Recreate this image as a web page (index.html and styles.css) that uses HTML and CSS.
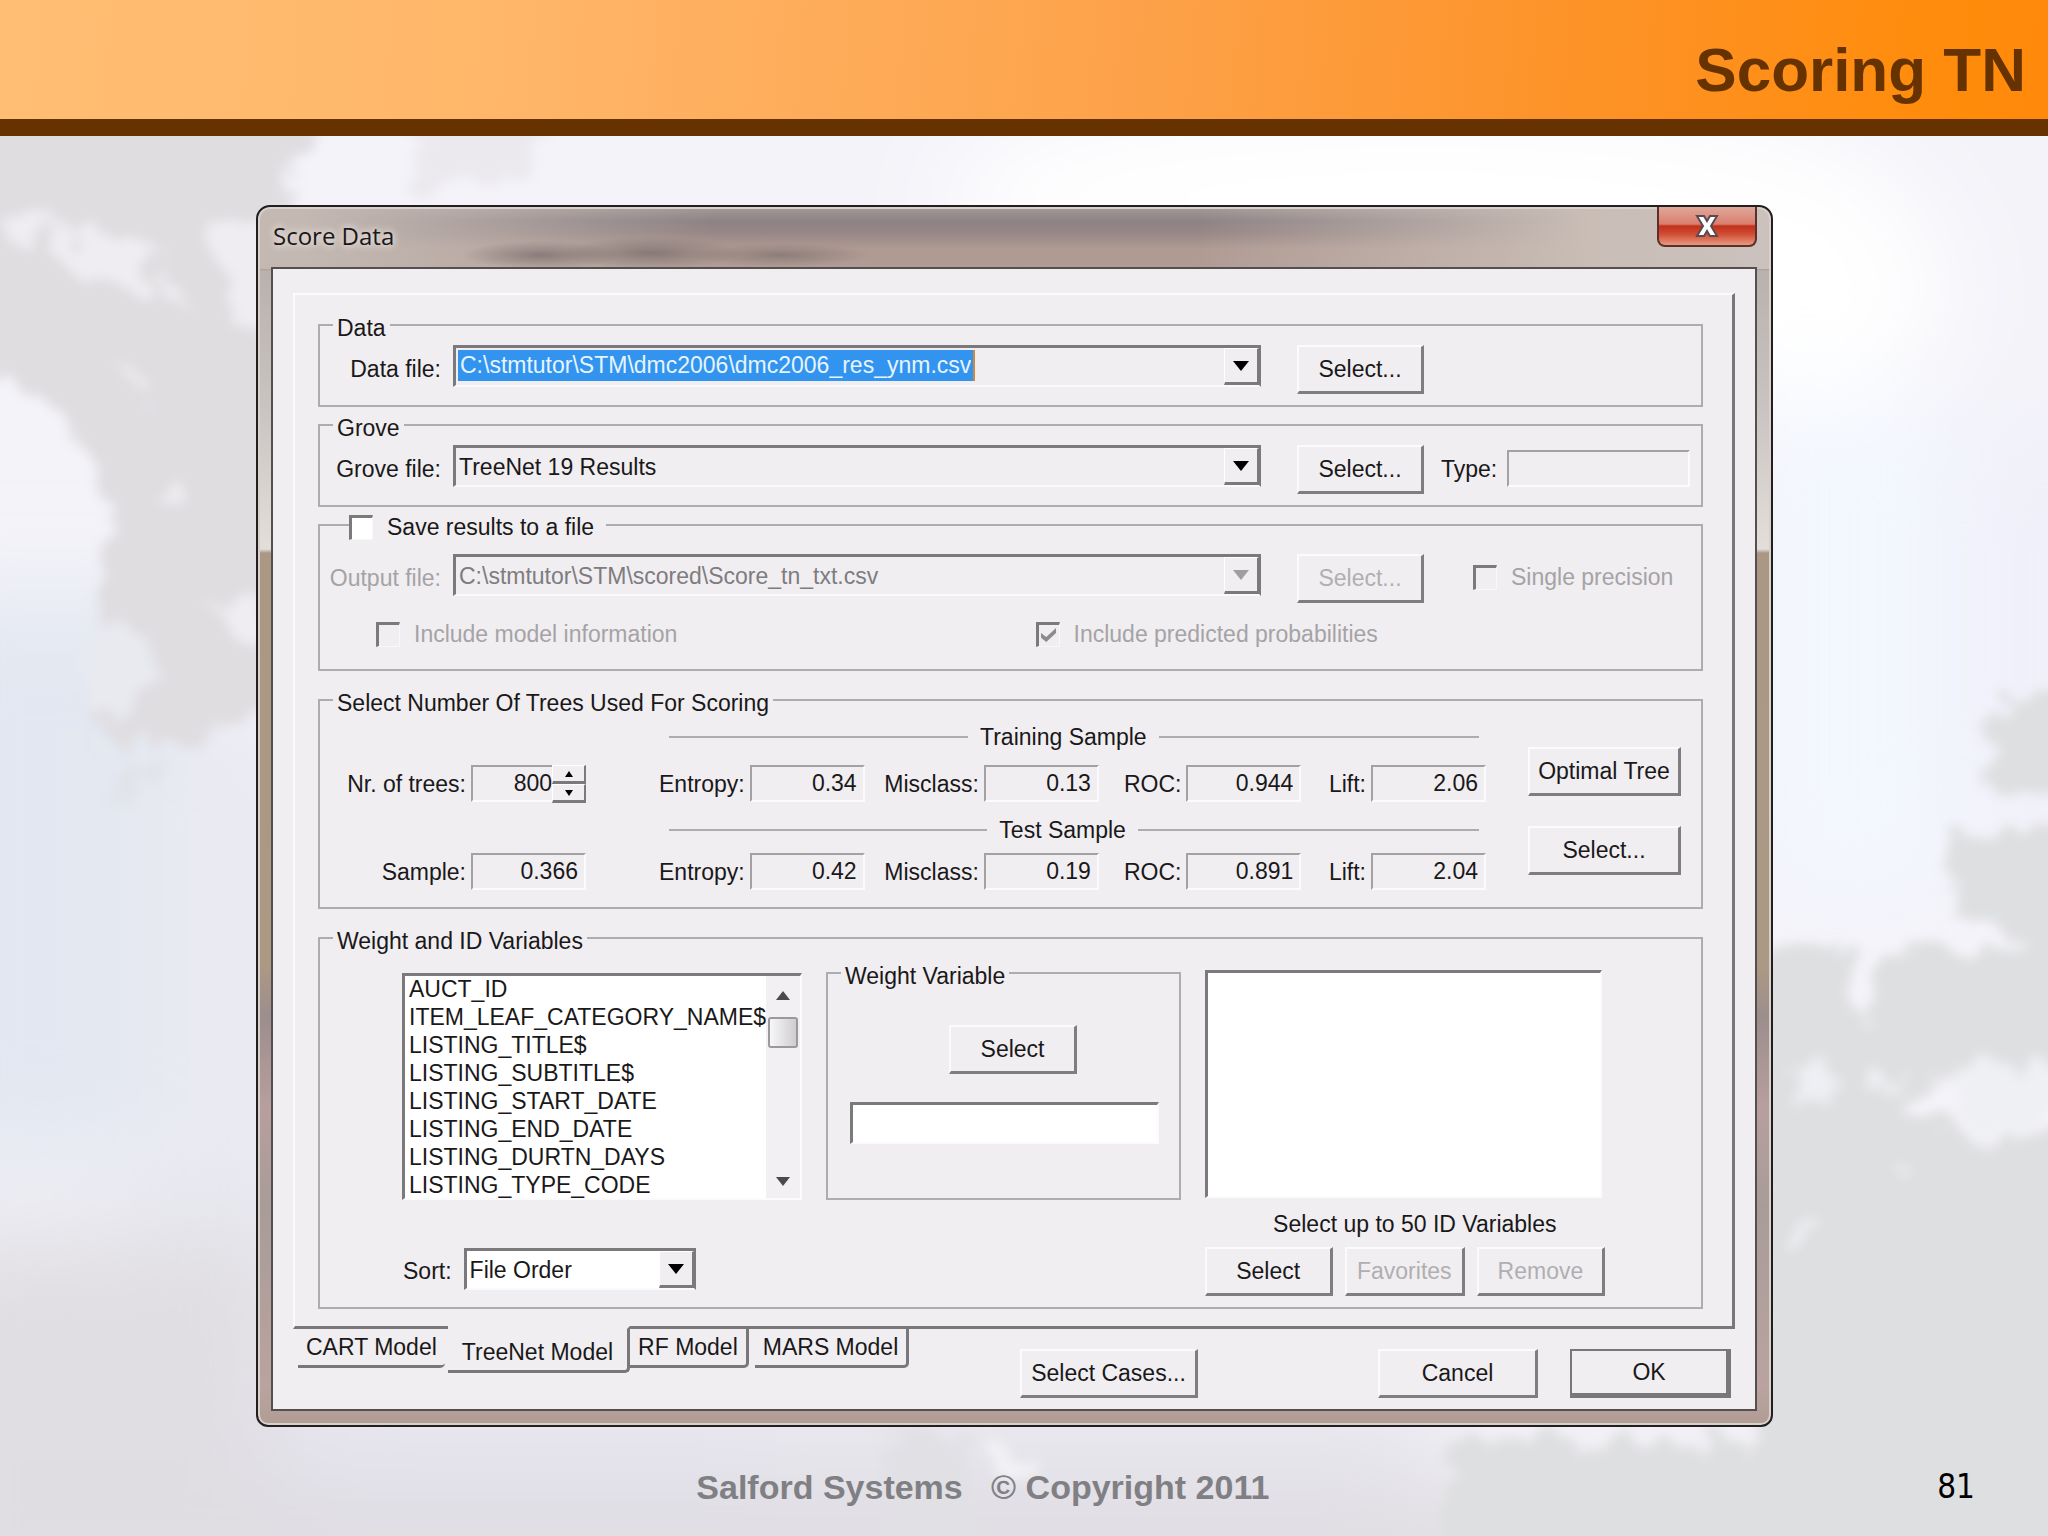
FILE: index.html
```html
<!DOCTYPE html>
<html lang="en">
<head>
<meta charset="utf-8">
<title>Scoring TN</title>
<link rel="stylesheet" href="styles.css">
</head>
<body>
<div class="slide">
  <svg class="backdrop" viewBox="0 0 2048 1536" preserveAspectRatio="none" aria-hidden="true">
    <defs>
      <filter id="soft" x="-20%" y="-20%" width="140%" height="140%"><feGaussianBlur stdDeviation="50"/></filter>
      <filter id="leaf" x="-10%" y="-10%" width="120%" height="120%">
        <feTurbulence type="fractalNoise" baseFrequency="0.03" numOctaves="4" seed="4" result="n"/>
        <feDisplacementMap in="SourceGraphic" in2="n" scale="60" xChannelSelector="R" yChannelSelector="G"/>
        <feGaussianBlur stdDeviation="6"/>
      </filter>
    </defs>
    <rect width="2048" height="1536" fill="#f4f3f9"/>
    <g filter="url(#soft)">
      <ellipse cx="1420" cy="200" rx="480" ry="110" fill="#ffffff"/>
      <ellipse cx="1800" cy="290" rx="150" ry="120" fill="#ffffff"/>
      <rect x="-100" y="600" width="300" height="560" fill="#e2e7f1"/>
      <rect x="130" y="720" width="200" height="580" fill="#e9eaf2"/>
      <rect x="1760" y="400" width="190" height="500" fill="#f3f7fe"/>
      <rect x="1960" y="430" width="200" height="400" fill="#f0f0fa"/>
      <rect x="-100" y="1230" width="400" height="370" fill="#e0dee2"/>
      <rect x="270" y="1380" width="500" height="120" fill="#e5e4ee"/>
      <rect x="-100" y="1490" width="2300" height="140" fill="#dfdde1"/>
      <rect x="760" y="1380" width="680" height="110" fill="#e7e6ed"/>
    </g>
    <g filter="url(#leaf)" fill="#dfdde0">
      <path d="M-40 90H310L290 190L330 260V720L256 720L200 745L120 740L80 700L95 610L110 510L80 440L30 390L-40 350Z"/>
      <path d="M400 100h170l-40 70-110 20z" fill="#ebe9ee"/>
      <g fill="#f0edf2">
        <path d="M50 225l60 10 45 25-10 30-60-8-30-25z"/>
        <path d="M170 270l25 20-10 20-22-10z"/>
        <path d="M215 215l80-10v135l-60-20-20-40z"/>
        <path d="M10 215l35 8v14l-35-6z"/>
        <path d="M130 370l25 12v12l-22-8z"/>
        <path d="M165 490l20 8v10l-20-5z"/>
        <path d="M200 610l70-15v50l-40-10z"/>
      </g>
      <path d="M95 620l45 15 20 45-40 35-35-10-8-45z" fill="#e8eaf0"/>
      <path d="M120 765l50-10-20 40-35 10z" fill="#e0e3e8"/>
      <g fill="#dedfe0">
        <path d="M1990 705l90-25v110h-95z"/>
        <path d="M1955 835l110-10v125l-70-20-40-20z"/>
        <path d="M1885 960l70-15 110-5v120l-130 10-70-20z"/>
        <path d="M1760 950l80 5 10 60 90 40-20 60-170 20z"/>
        <path d="M1760 1130l120-30 90 40 110-5v430h-330z"/>
        <path d="M1450 1440h350v130h-350z"/>
      </g>
      <g fill="#eff0f4">
        <path d="M1945 1075l60-10 60 0v55l-40 15-70-15z"/>
        <path d="M1790 1075l50-5-5 30-40 5z"/>
        <path d="M1870 1075l35 5-5 12-30 0z"/>
        <path d="M1790 1225l20 0 0 15-15 5z"/>
        <path d="M1890 1170l25-8v14z"/>
        <path d="M1985 940l50 5-20 12z"/>
      </g>
      <path d="M880 1430h90v130h-85z" fill="#e1e0e5"/>
      <path d="M990 1450l50 15-10 18-40-10z" fill="#f3f2f5"/>
    </g>
  </svg>

  <header class="banner"><h1>Scoring TN</h1></header>

  <main class="stage">
    <section class="window" aria-labelledby="win-title">
      <div class="titlebar">
        <h2 id="win-title">Score Data</h2>
        <button type="button" class="close" aria-label="Close">
          <svg width="28" height="26" viewBox="0 0 28 26"><path d="M4 3h7l3 5 3-5h7l-6 10 6 10h-7l-3-5-3 5H4l6-10z" fill="#fff" stroke="#5a4a52" stroke-width="2"/></svg>
        </button>
      </div>
      <form class="client">
        <div class="panel">

          <fieldset class="group">
            <legend>Data</legend>
            <div class="file-row">
              <label for="data-file">Data file:</label>
              <div class="combo">
                <input id="data-file" class="picked" type="text" value="C:\stmtutor\STM\dmc2006\dmc2006_res_ynm.csv">
                <button type="button" class="drop" aria-label="Open list"><svg width="16" height="10" viewBox="0 0 16 10"><path d="M0 0h16l-8 10z"/></svg></button>
              </div>
              <button type="button" class="btn">Select...</button>
            </div>
          </fieldset>

          <fieldset class="group">
            <legend>Grove</legend>
            <div class="file-row">
              <label for="grove-file">Grove file:</label>
              <div class="combo">
                <select id="grove-file"><option>TreeNet 19 Results</option></select>
                <span class="drop"><svg width="16" height="10" viewBox="0 0 16 10"><path d="M0 0h16l-8 10z"/></svg></span>
              </div>
              <button type="button" class="btn">Select...</button>
              <div class="extra"><label for="type">Type:</label><input id="type" class="readout" type="text" readonly></div>
            </div>
          </fieldset>

          <fieldset class="group save">
            <legend><label class="check"><input type="checkbox"><span>Save results to a file</span></label></legend>
            <div class="file-row off">
              <label for="output-file">Output file:</label>
              <div class="combo">
                <select id="output-file" disabled><option>C:\stmtutor\STM\scored\Score_tn_txt.csv</option></select>
                <span class="drop"><svg width="16" height="10" viewBox="0 0 16 10"><path d="M0 0h16l-8 10z"/></svg></span>
              </div>
              <button type="button" class="btn" disabled>Select...</button>
              <label class="check single"><input type="checkbox" disabled><span>Single precision</span></label>
            </div>
            <div class="includes off">
              <label class="check"><input type="checkbox" disabled><span>Include model information</span></label>
              <label class="check"><input type="checkbox" checked disabled><span>Include predicted probabilities</span></label>
            </div>
          </fieldset>

          <fieldset class="group trees">
            <legend>Select Number Of Trees Used For Scoring</legend>
            <div class="trees-body">
              <div class="counts">
                <div class="field">
                  <label for="nr">Nr. of trees:</label>
                  <div class="spin">
                    <input id="nr" class="readout" type="text" value="800">
                    <div class="arrows">
                      <button type="button" aria-label="More"><svg width="8" height="6" viewBox="0 0 8 6"><path d="M0 6h8l-4-6z"/></svg></button>
                      <button type="button" aria-label="Fewer"><svg width="8" height="6" viewBox="0 0 8 6"><path d="M0 0h8l-4 6z"/></svg></button>
                    </div>
                  </div>
                </div>
                <div class="field"><label for="sample">Sample:</label><input id="sample" class="readout" type="text" value="0.366" readonly></div>
              </div>
              <div class="stats">
                <h3 class="first">Training Sample</h3>
                <div class="stat-row">
                  <div class="field"><label for="e1">Entropy:</label><input id="e1" class="readout" value="0.34" readonly></div>
                  <div class="field"><label for="m1">Misclass:</label><input id="m1" class="readout" value="0.13" readonly></div>
                  <div class="field"><label for="r1">ROC:</label><input id="r1" class="readout" value="0.944" readonly></div>
                  <div class="field"><label for="l1">Lift:</label><input id="l1" class="readout" value="2.06" readonly></div>
                </div>
                <h3>Test Sample</h3>
                <div class="stat-row">
                  <div class="field"><label for="e2">Entropy:</label><input id="e2" class="readout" value="0.42" readonly></div>
                  <div class="field"><label for="m2">Misclass:</label><input id="m2" class="readout" value="0.19" readonly></div>
                  <div class="field"><label for="r2">ROC:</label><input id="r2" class="readout" value="0.891" readonly></div>
                  <div class="field"><label for="l2">Lift:</label><input id="l2" class="readout" value="2.04" readonly></div>
                </div>
              </div>
              <div class="tree-buttons">
                <button type="button" class="btn">Optimal Tree</button>
                <button type="button" class="btn">Select...</button>
              </div>
            </div>
          </fieldset>

          <fieldset class="group vars">
            <legend>Weight and ID Variables</legend>
            <div class="vars-body">
              <div class="source">
                <div class="listbox">
                  <select size="8" aria-label="Variables">
                    <option>AUCT_ID</option>
                    <option>ITEM_LEAF_CATEGORY_NAME$</option>
                    <option>LISTING_TITLE$</option>
                    <option>LISTING_SUBTITLE$</option>
                    <option>LISTING_START_DATE</option>
                    <option>LISTING_END_DATE</option>
                    <option>LISTING_DURTN_DAYS</option>
                    <option>LISTING_TYPE_CODE</option>
                  </select>
                  <div class="scroll">
                    <svg width="14" height="9" viewBox="0 0 14 9"><path d="M0 9h14l-7-9z"/></svg>
                    <span class="thumb"></span>
                    <svg class="down" width="14" height="9" viewBox="0 0 14 9"><path d="M0 0h14l-7 9z"/></svg>
                  </div>
                </div>
                <div class="sort">
                  <label for="sort">Sort:</label>
                  <div class="combo white">
                    <select id="sort"><option>File Order</option></select>
                    <span class="drop"><svg width="16" height="10" viewBox="0 0 16 10"><path d="M0 0h16l-8 10z"/></svg></span>
                  </div>
                </div>
              </div>
              <fieldset class="group weight">
                <legend>Weight Variable</legend>
                <button type="button" class="btn">Select</button>
                <input class="box" type="text" aria-label="Weight Variable">
              </fieldset>
              <div class="ids">
                <select class="box" size="8" aria-label="ID Variables"></select>
                <p>Select up to 50 ID Variables</p>
                <div class="id-buttons">
                  <button type="button" class="btn">Select</button>
                  <button type="button" class="btn" disabled>Favorites</button>
                  <button type="button" class="btn" disabled>Remove</button>
                </div>
              </div>
            </div>
          </fieldset>
        </div>

        <div class="bottom">
          <nav class="tabs">
            <button type="button" class="tab cart">CART Model</button>
            <button type="button" class="tab current">TreeNet Model</button>
            <button type="button" class="tab rf">RF Model</button>
            <button type="button" class="tab">MARS Model</button>
          </nav>
          <button type="button" class="btn cases">Select Cases...</button>
          <button type="button" class="btn cancel">Cancel</button>
          <button type="submit" class="btn ok">OK</button>
        </div>
      </form>
    </section>
  </main>

  <footer class="foot"><p>Salford Systems   © Copyright 2011</p><span class="page">81</span></footer>
</div>
</body>
</html>
```
FILE: styles.css
```css
* { box-sizing: border-box; }
body { margin: 0; background: #dfdde1; font-family: "Liberation Sans", Arial, sans-serif; }
h1, h2, h3, p { margin: 0; font-weight: normal; }
input, select, button { font: inherit; color: inherit; margin: 0; border-radius: 0; }

.slide { position: relative; min-height: 100vh; display: flex; flex-direction: column; isolation: isolate; overflow: hidden; }
.backdrop { position: absolute; inset: 0; width: 100%; height: 100%; z-index: -1; }

.banner {
  background: linear-gradient(95deg, #ffbe74 0%, #ffb669 25%, #fda24a 55%, #fd9226 78%, #ff8c0c 94%, #ff890a 100%);
  border-bottom: 17px solid #663300;
  padding: 34px 22px 13px;
  text-align: right;
}
.banner h1 { font-size: 62px; line-height: 72px; font-weight: bold; color: #663300; }

.stage { padding: 69px 275px 0 256px; }
.window {
  border: 2px solid #221f20;
  border-radius: 14px 14px 12px 12px;
  padding: 0 14px 14px 13px;
  color: #1a1819;
  font-size: 23px;
  line-height: 30px;
  box-shadow: inset 0 0 0 2px #d9d0cc;
  background:
    linear-gradient(90deg, #c3b8b2 0, #c3b8b2 3%, rgba(195,184,178,0) 30%, rgba(201,188,181,0) 62%, #c9bdb6 88%, #cbc2bd 100%) 0 0 / 100% 62px no-repeat,
    linear-gradient(180deg, #a59b99 0, #8d8285 14px, #978786 26px, #b09b93 42px, #b09c94 62px, #b9b1ad 64px, #c9c4c1 200px, #e4dedb 342px, #aa9885 346px, #ab9984 760px, #9c8e8d 810px, #b79f9e 900px, #a89c99 1000px, #baa3a0 1180px, #b19d94 100%);
}
.titlebar {
  display: flex; justify-content: space-between; align-items: flex-start; height: 60px;
  background:
    radial-gradient(ellipse 80px 14px at 270px 48px, #6a5f6099, #6a5f6000),
    radial-gradient(ellipse 90px 16px at 380px 46px, #6a5f6099, #6a5f6000),
    radial-gradient(ellipse 90px 12px at 510px 48px, #6a5f6080, #6a5f6000);
}
.titlebar h2 { font-family: "Open Sans", sans-serif; font-size: 24px; line-height: 32px; margin: 13px 0 0 2px; text-shadow: 0 0 10px #efe6e3, 0 0 6px #efe6e3; }
.close {
  display: flex; align-items: center; justify-content: center;
  width: 100px; height: 40px; padding: 0;
  border: 2px solid #5b2f2c; border-top: 0; border-radius: 0 0 8px 8px;
  background: linear-gradient(180deg, #e0a79b 0, #d97f6e 45%, #c2301a 50%, #cf4a31 70%, #e79a80 100%);
}

.client { border: 2px solid #55504f; background: #f0eef1; padding: 24px 20px 11px; }
.panel { border: 2px solid #fbfafc; border-right: 3px solid #79777a; border-bottom: 3px solid #79777a; padding: 15px 29px 17px 23px; }

.group { margin: 0; padding: 0 0 11px; border: 2px solid #aeacaf; min-width: 0; }
.group + .group { margin-top: 3px; }
.group > legend { margin-left: 13px; padding: 0 4px; line-height: 36px; height: 30px; }
.group.save { padding-bottom: 18px; }
.group.save > legend { margin-left: 29px; padding: 0 12px 0 0; }
.group.save > legend .check { height: 34px; }
.group.trees, .group.vars { margin-top: 14px; }
.group.trees { padding-bottom: 17px; }

.file-row { display: grid; grid-template-columns: 121px minmax(0, 1fr) 151px 265px; column-gap: 12px; align-items: start; padding-top: 5px; }
.save .file-row { padding-top: 14px; }
.file-row > label:first-child { text-align: right; line-height: 48px; }
.file-row > .btn { margin-left: 24px; }

.combo { display: flex; height: 42px; background: #f0eef1; border: 3px solid #7b797c; border-right-width: 2px; border-bottom: 2px solid #faf9fb; }
.combo.white { background: #fff; }
.combo select { flex: 1; min-width: 0; appearance: none; border: 0; padding: 0 3px; background: transparent; opacity: 1; outline: 0; line-height: 30px; }
.combo .picked { field-sizing: content; height: 31px; padding: 0 2px; margin: 2px auto 0 2px; border: 0; border-right: 2px solid #c98a3c; background: #3294ee; color: #e6f4ff; }
.drop { display: flex; align-items: center; justify-content: center; width: 35px; padding: 0; background: #f0eef1; border: 1px solid #fff; border-right: 2px solid #7b797c; border-bottom: 3px solid #7b797c; }
.off { color: #a5a3a6; }
.off .combo select { color: #7e7c7f; }
.off svg { fill: #a09ea1; }

.btn { height: 49px; padding: 0; text-align: center; background: #f0eef1; border: 2px solid #fbfafc; border-right: 3px solid #7f7d80; border-bottom: 3px solid #7f7d80; color: #1a1819; white-space: nowrap; }
.btn:disabled { color: #b0aeb1; }

.readout { height: 37px; min-width: 0; padding: 0 6px 0 4px; text-align: right; background: transparent; border: 2px solid #a3a1a4; border-right-color: #fbfafc; border-bottom-color: #fbfafc; outline: 0; }
.extra { display: flex; align-items: center; height: 47px; gap: 10px; padding: 0 11px 0 5px; }
.extra .readout { flex: 1; }

.check { display: inline-flex; align-items: center; gap: 14px; }
.check input { appearance: none; width: 24px; height: 25px; border: 3px solid #7b797c; border-right: 1px solid #f8f7f9; border-bottom: 1px solid #f8f7f9; background: #fff; display: grid; place-items: center; }
.check input:disabled { background: #f0eef1; }
.check input:checked::before { content: ""; width: 15px; height: 14px; background: #8d8b8e; clip-path: polygon(0 35%, 35% 65%, 100% 0, 100% 35%, 35% 100%, 0 70%); }
.single { height: 46px; padding-left: 37px; }
.includes { display: grid; grid-template-columns: 659fr 609fr; margin: 14px 56px 0; height: 34px; }
.includes .check { justify-self: start; }

.trees-body { display: flex; padding-right: 20px; }
.counts { display: flex; flex-direction: column; gap: 51px; width: 266px; padding-top: 50px; }
.field { display: flex; align-items: center; gap: 5px; }
.field > label { flex: 1; text-align: right; white-space: nowrap; }
.field > .readout, .spin { width: 115px; flex: none; }
.spin { display: flex; }
.spin .readout { flex: 1; padding: 0; border-right: 0; }
.arrows { display: flex; flex-direction: column; width: 34px; height: 38px; margin-bottom: -1px; }
.arrows button { flex: 1; display: flex; align-items: center; justify-content: center; padding: 0; background: #f0eef1; border: 1px solid #fff; border-right: 2px solid #7b797c; border-bottom: 3px solid #7b797c; }
.stats { flex: 1; min-width: 0; margin: 0 42px 0 73px; }
.stats h3 { display: flex; align-items: center; gap: 12px; font-size: 23px; margin: 13px 7px 8px 10px; }
.stats h3.first { margin-top: 7px; margin-bottom: 13px; }
.stats h3::before, .stats h3::after { content: ""; flex: 14; height: 2px; background: #aeacaf; }
.stats h3::after { flex: 15; }
.stat-row { display: grid; grid-template-columns: 200fr 236fr 204fr 186fr; }
.tree-buttons { display: flex; flex-direction: column; gap: 30px; width: 153px; padding-top: 32px; }

.vars-body { display: grid; grid-template-columns: 398fr 356fr 402fr; column-gap: 24px; align-items: start; padding: 0 96px 0 82px; }
.source { padding-top: 20px; }
.listbox { display: flex; height: 227px; background: #fff; border: 3px solid #7b797c; border-right: 2px solid #fbfafc; border-bottom: 2px solid #fbfafc; }
.listbox select { flex: 1; min-width: 0; height: 222px; border: 0; padding: 0; background: #fff; overflow: hidden; outline: 0; }
.listbox option { height: 28px; min-height: 28px; line-height: 28px; padding: 0 0 0 4px; overflow: visible; }
.scroll { display: flex; flex-direction: column; align-items: center; width: 34px; flex: none; background: #f2f0f3; padding: 15px 0 12px; fill: #4b494c; }
.scroll .thumb { width: 30px; height: 31px; margin-top: 17px; border: 2px solid #9b999c; border-radius: 3px; background: linear-gradient(90deg, #f7f6f8, #cfcdd0); }
.scroll .down { margin-top: auto; }
.sort { display: flex; align-items: center; gap: 12px; margin-top: 48px; }
.sort label { padding: 4px 0 0 1px; }
.sort .combo { width: 232px; }
.box { background: #fff; border: 3px solid #7b797c; border-right: 2px solid #fbfafc; border-bottom: 2px solid #fbfafc; outline: 0; }
.group.weight { margin-top: 5px; padding: 0 0 54px; }
.weight .btn { display: block; width: 128px; margin: 37px auto 28px 121px; }
.weight .box { display: block; width: calc(100% - 42px); height: 42px; margin-left: 22px; }
.ids { padding-top: 17px; }
.ids .box { display: block; width: calc(100% - 3px); height: 228px; }
.ids p { text-align: center; margin: 11px 0 8px; padding-left: 20px; }
.id-buttons { display: grid; grid-template-columns: 128fr 120fr 128fr; column-gap: 12px; }

.bottom { display: flex; align-items: flex-start; padding-right: 4px; }
.tabs { display: flex; align-items: flex-start; margin: -3px auto 0 5px; }
.tab { height: 42px; padding: 0 8px; background: #f0eef1; border: solid #79777a; border-width: 3px 3px 3px 0; border-radius: 0 0 5px 0; white-space: nowrap; }
.tab.cart { border-right: 0; }
.tab.current { height: 47px; margin: 0 0 0 3px; padding: 5px 14px 0; border-top-color: #f0eef1; }
.tab.rf { margin-right: 6px; }
.bottom .btn { margin-top: 20px; }
.cases { width: 178px; }
.cancel { width: 160px; margin-left: 180px; }
.ok { width: 161px; margin-left: 32px; }
.bottom .ok { border: 2px solid #79777a; border-right-width: 5px; border-bottom-width: 5px; }

.foot { display: flex; justify-content: space-between; align-items: center; padding: 40px 73px 27px 34%; line-height: 40px; }
.foot p { font-size: 34px; font-weight: bold; color: #808084; white-space: pre; }
.page { font-family: "DejaVu Sans Condensed", "DejaVu Sans", sans-serif; font-stretch: condensed; font-size: 33px; color: #000; }
```
